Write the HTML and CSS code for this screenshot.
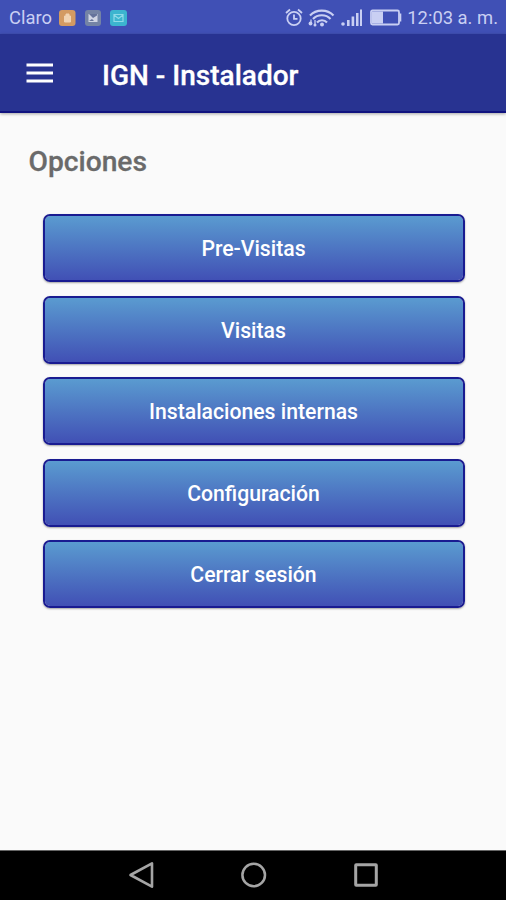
FILE: index.html
```html
<!DOCTYPE html>
<html lang="es">
<head>
<meta charset="utf-8">
<title>IGN - Instalador</title>
<link rel="stylesheet" href="styles.css">
</head>
<body>
<div class="statusbar">
  <span class="carrier">Claro</span>
  <svg class="notices" width="70" height="18" viewBox="0 0 70 18">
    <rect x="0" y="1" width="16.500" height="16" rx="3" fill="#d39a62"/>
    <path d="M5.500 7h6v6h-6zM7 7V5h3v2" fill="#f0d3b3" stroke="#f0d3b3"/>
    <rect x="26" y="1" width="16" height="16" rx="3" fill="#7483a5"/>
    <path d="M29.500 5h9v8h-9z" fill="#d0d5e4"/>
    <path d="M30 5l4 4 4-2.500V5zM30 12l3-2 2 2z" fill="#65739b"/>
    <rect x="51" y="1" width="17" height="16" rx="3" fill="#3cb5cf"/>
    <path d="M55 5.500h9v7h-9zM55 6l4.500 3.500L64 6" fill="none" stroke="#8edae8" stroke-width="1.200"/>
  </svg>
  <svg class="signals" width="120" height="22" viewBox="0 0 120 22">
    <g fill="none" stroke="#c9cff3" stroke-width="1.800">
      <circle cx="10" cy="11.500" r="6.700"/>
      <path d="M10 7.500v4.300h3.500M2 6l4-3.500M18 6L14 2.500" stroke-width="1.800"/>
      <path d="M26 8.500c6-6.500 17.500-6.500 23.500 0M29 12c4.500-5 13-5 17.500 0M33 15.500c2.500-3 7.500-3 10 0" stroke-width="2.100"/>
      <path d="M27 12.500v4M31 13v5" stroke-width="1.300"/>
      <rect x="87" y="3.500" width="28" height="14" rx="1.500"/>
    </g>
    <g fill="#c9cff3">
      <circle cx="38" cy="17.500" r="2"/>
      <circle cx="26.500" cy="16.500" r="1.900"/>
      <circle cx="31" cy="18" r="1.500"/>
      <circle cx="59" cy="17" r="1.800"/>
      <path d="M63 13h2.600v6H63zM67.600 9.500h2.600V19h-2.600zM72 6h2.500v13H72zM76 2.500h2V19h-2zM88 4.500h11v12H88zM115.500 6.500h1.800v8h-1.800z"/>
    </g>
  </svg>
  <span class="clock">12:03 a. m.</span>
</div>
<header class="appbar">
  <svg class="menu" width="28" height="22" viewBox="0 0 28 22"><path d="M0.500 3h26.500M0.500 11h26.500M0.500 19h26.500" stroke="#fff" stroke-width="3"/></svg>
  <h1 class="title">IGN - Instalador</h1>
</header>
<main class="content">
  <h2 class="heading">Opciones</h2>
  <div class="options">
    <button class="option">Pre-Visitas</button>
    <button class="option">Visitas</button>
    <button class="option">Instalaciones internas</button>
    <button class="option">Configuración</button>
    <button class="option">Cerrar sesión</button>
  </div>
</main>
<nav class="navbar">
  <svg width="28" height="30" viewBox="0 0 28 30"><path d="M3.500 15L25 3.300v23.400z" fill="none" stroke="#a5a5a5" stroke-width="2.600" stroke-linejoin="round"/></svg>
  <svg width="28" height="30" viewBox="0 0 28 30"><circle cx="13.700" cy="15" r="11.300" fill="none" stroke="#a5a5a5" stroke-width="2.500"/></svg>
  <svg width="28" height="30" viewBox="0 0 28 30"><rect x="3.700" y="4.700" width="20.600" height="20.600" rx=".5" fill="none" stroke="#a5a5a5" stroke-width="3"/></svg>
</nav>
</body>
</html>
```
FILE: styles.css
```css
* { box-sizing: border-box; }
body {
  margin: 0;
  height: 900px;
  display: flex;
  flex-direction: column;
  overflow: hidden;
  background: #fafafa;
  font-family: Roboto, "Liberation Sans", sans-serif;
}
.statusbar {
  flex: none;
  height: 34px;
  display: flex;
  align-items: center;
  padding: 1px 8px 0 9px;
  background: #4050b5;
  color: #c9cff3;
  font-size: 18.400px;
  white-space: nowrap;
}
.notices { margin-left: 7px; }
.signals { margin-left: auto; }
.clock { margin-left: 3px; }
.appbar {
  flex: none;
  height: 79px;
  display: flex;
  align-items: center;
  padding: 1px 26px 0;
  background: #283391;
  border-bottom: 2px solid #10127f;
  box-shadow: 0 1px 3px rgba(0, 0, 0, .35);
}
.title {
  margin: 4px 0 0 48px;
  color: #fff;
  font-size: 28px;
  font-weight: 500;
  -webkit-text-stroke: .3px;
}
.content {
  flex: 1;
  padding: 32px 41.500px 0 42.500px;
}
.heading {
  margin: 0 0 0 -14px;
  color: #6a6a6a;
  font-size: 28.200px;
  line-height: 34px;
  font-weight: 500;
  -webkit-text-stroke: .3px;
}
.options {
  margin-top: 35px;
  display: flex;
  flex-direction: column;
  gap: 13.600px;
}
.option {
  height: 68px;
  padding: 1px 0 0;
  border: 2px solid #191b91;
  border-radius: 7px;
  background: linear-gradient(#5a9bd0, #4150b5) padding-box;
  box-shadow: 0 1px 2px rgba(0, 0, 0, .35);
  color: #fff;
  font: 500 21.200px Roboto, "Liberation Sans", sans-serif;
}
.navbar {
  flex: none;
  height: 50px;
  display: flex;
  justify-content: center;
  align-items: center;
  gap: 84.500px;
  padding: 0 0 1px 1px;
  background: #000;
  border-top: 1px solid #666;
}
```
